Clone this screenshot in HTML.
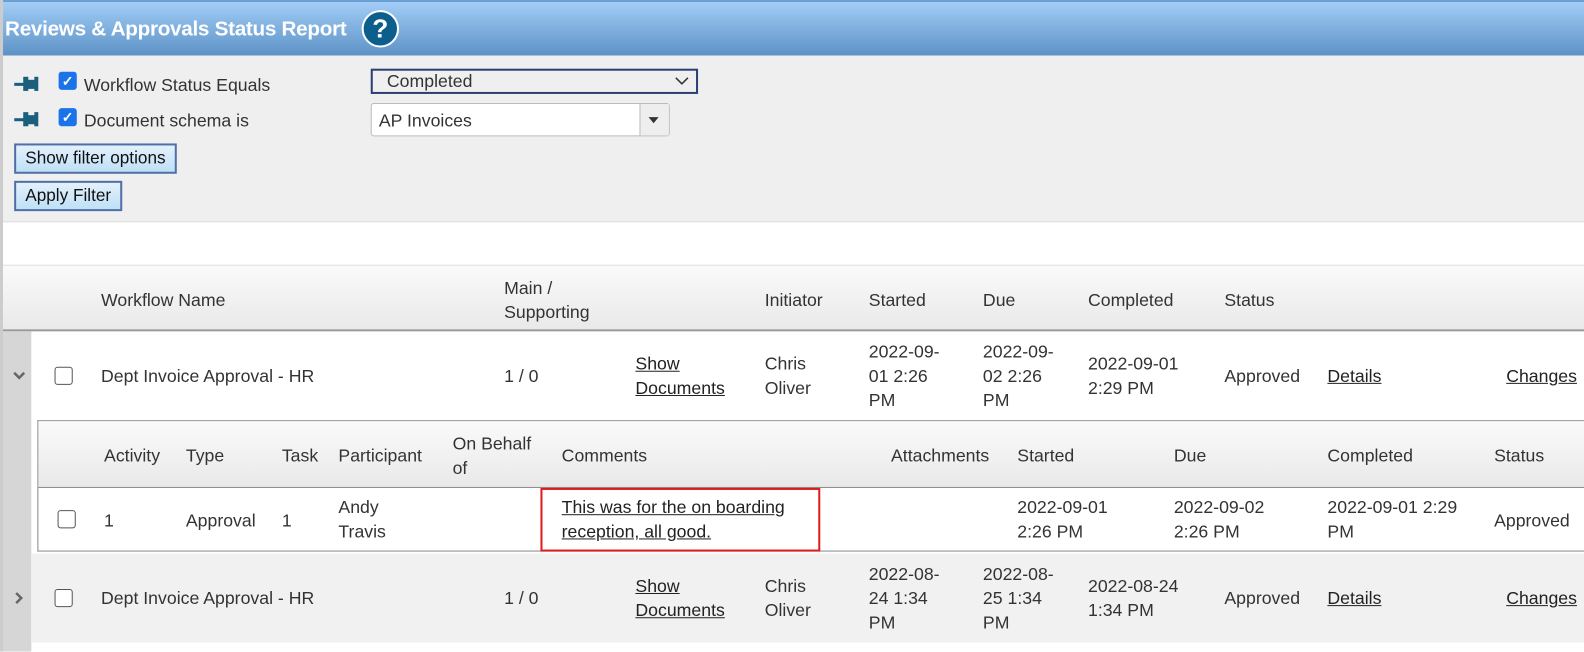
<!DOCTYPE html>
<html><head><meta charset="utf-8"><style>
*{margin:0;padding:0;box-sizing:border-box}
body{width:1584px;height:645px;overflow:hidden;background:#fff;font-family:"Liberation Sans",sans-serif;font-size:17.5px;color:#333;position:relative}
#w{position:absolute;left:0;top:0;width:1568px;height:640px;transform:scale(1.0102);transform-origin:0 0}
.a{position:absolute;line-height:24px;white-space:nowrap}
u{text-decoration:underline;color:#222}
.cb{position:absolute;width:18px;height:18px;border:1.5px solid #555;border-radius:3px;background:#fff}
.chk{position:absolute;width:18px;height:18px;background:#1a73e8;border-radius:3px;color:#fff;font-size:14px;line-height:18px;text-align:center;font-weight:bold}
.btn{position:absolute;height:30px;border:2px solid #4f6fa6;background:linear-gradient(#e3f1fc,#bfe0f7);font-size:17px;line-height:26px;padding:0 9px;color:#111}
.pin{position:absolute;width:24px;height:16px}
</style></head><body><div id="w">
<div style="position:absolute;left:0;top:0;width:3px;height:645px;background:#ccc"></div>
<div style="position:absolute;left:3px;top:0;width:1581px;height:55px;background:linear-gradient(#a2cdf6,#5d92c6);border-top:2px solid #6b9fd3"></div>
<div class="a" style="left:5px;top:16px;color:#fff;font-weight:bold;font-size:20.5px;line-height:26px;letter-spacing:-0.3px">Reviews &amp; Approvals Status Report</div>
<div style="position:absolute;left:358px;top:10px;width:37px;height:37px;border-radius:50%;background:#0c5f8c;border:2px solid #fff;color:#fff;font-weight:bold;font-size:26px;line-height:32px;text-align:center">?</div>
<div style="position:absolute;left:3px;top:55px;width:1581px;height:165px;background:#efefef;border-bottom:1px solid #ddd"></div>
<svg class="pin" style="left:14px;top:75px" viewBox="0 0 24 16"><rect x="0" y="7" width="10" height="3" fill="#1b5f7d"/><rect x="9" y="1" width="5" height="14" fill="#1b5f7d"/><rect x="13" y="4" width="8" height="9" fill="#1b5f7d"/><rect x="20" y="1" width="4" height="14" fill="#1b5f7d"/></svg>
<svg class="pin" style="left:14px;top:110px" viewBox="0 0 24 16"><rect x="0" y="7" width="10" height="3" fill="#1b5f7d"/><rect x="9" y="1" width="5" height="14" fill="#1b5f7d"/><rect x="13" y="4" width="8" height="9" fill="#1b5f7d"/><rect x="20" y="1" width="4" height="14" fill="#1b5f7d"/></svg>
<div class="chk" style="left:58px;top:71px">✓</div>
<div class="chk" style="left:58px;top:107px">✓</div>
<div class="a" style="left:83px;top:72px">Workflow Status Equals</div>
<div class="a" style="left:83px;top:107px">Document schema is</div>
<div style="position:absolute;left:367px;top:68px;width:324px;height:25px;border:2px solid #2a3f73;background:#efefef"></div>
<div class="a" style="left:383px;top:68px">Completed</div>
<svg style="position:absolute;left:668px;top:75px" width="14" height="10"><path d="M1 2 L7 8 L13 2" stroke="#333" stroke-width="1.5" fill="none"/></svg>
<div style="position:absolute;left:367px;top:102px;width:296px;height:33px;border:1px solid #bbb;border-radius:3px;background:#fff"></div>
<div style="position:absolute;left:633px;top:103px;width:29px;height:31px;background:#eee;border-left:1px solid #bbb"></div>
<svg style="position:absolute;left:641px;top:115px" width="12" height="8"><path d="M1 1 L11 1 L6 7Z" fill="#333"/></svg>
<div class="a" style="left:375px;top:107px">AP Invoices</div>
<div class="btn" style="left:14px;top:142px">Show filter options</div>
<div class="btn" style="left:14px;top:179px">Apply Filter</div>
<div style="position:absolute;left:3px;top:262px;width:1581px;height:66px;background:linear-gradient(#fafafa,#e9e9e9);border-top:1px solid #ddd;border-bottom:2px solid #999"></div>
<div class="a" style="left:100px;top:285px">Workflow Name</div>
<div class="a" style="left:499px;top:273px">Main /<br>Supporting</div>
<div class="a" style="left:757px;top:285px">Initiator</div>
<div class="a" style="left:860px;top:285px">Started</div>
<div class="a" style="left:973px;top:285px">Due</div>
<div class="a" style="left:1077px;top:285px">Completed</div>
<div class="a" style="left:1212px;top:285px">Status</div>
<div style="position:absolute;left:3px;top:328px;width:28px;height:317px;background:#d6d6d6"></div>
<svg style="position:absolute;left:12px;top:367px" width="14" height="10"><path d="M2 2 L7 7 L12 2" stroke="#666" stroke-width="2.5" fill="none"/></svg>
<div class="cb" style="left:54px;top:363px"></div>
<div class="a" style="left:100px;top:360px">Dept Invoice Approval - HR</div>
<div class="a" style="left:499px;top:360px">1 / 0</div>
<div class="a" style="left:629px;top:348px"><u>Show</u><br><u>Documents</u></div>
<div class="a" style="left:757px;top:348px">Chris<br>Oliver</div>
<div class="a" style="left:860px;top:336px">2022-09-<br>01 2:26<br>PM</div>
<div class="a" style="left:973px;top:336px">2022-09-<br>02 2:26<br>PM</div>
<div class="a" style="left:1077px;top:348px">2022-09-01<br>2:29 PM</div>
<div class="a" style="left:1212px;top:360px">Approved</div>
<div class="a" style="left:1314px;top:360px"><u>Details</u></div>
<div class="a" style="left:1491px;top:360px"><u>Changes</u></div>
<div style="position:absolute;left:37px;top:416px;width:1547px;height:130px;border:1px solid #888;border-right:none;background:#fff"></div>
<div style="position:absolute;left:38px;top:417px;width:1546px;height:66px;background:linear-gradient(#fafafa,#e9e9e9);border-bottom:1px solid #888"></div>
<div class="a" style="left:103px;top:439px">Activity</div>
<div class="a" style="left:184px;top:439px">Type</div>
<div class="a" style="left:279px;top:439px">Task</div>
<div class="a" style="left:335px;top:439px">Participant</div>
<div class="a" style="left:448px;top:427px">On Behalf<br>of</div>
<div class="a" style="left:556px;top:439px">Comments</div>
<div class="a" style="left:882px;top:439px">Attachments</div>
<div class="a" style="left:1007px;top:439px">Started</div>
<div class="a" style="left:1162px;top:439px">Due</div>
<div class="a" style="left:1314px;top:439px">Completed</div>
<div class="a" style="left:1479px;top:439px">Status</div>
<div class="cb" style="left:57px;top:505px"></div>
<div class="a" style="left:103px;top:503px">1</div>
<div class="a" style="left:184px;top:503px">Approval</div>
<div class="a" style="left:279px;top:503px">1</div>
<div class="a" style="left:335px;top:490px">Andy<br>Travis</div>
<div style="position:absolute;left:535px;top:483px;width:277px;height:63px;border:2px solid #e01b1b"></div>
<div class="a" style="left:556px;top:490px"><u>This was for the on boarding</u><br><u>reception, all good.</u></div>
<div class="a" style="left:1007px;top:490px">2022-09-01<br>2:26 PM</div>
<div class="a" style="left:1162px;top:490px">2022-09-02<br>2:26 PM</div>
<div class="a" style="left:1314px;top:490px">2022-09-01 2:29<br>PM</div>
<div class="a" style="left:1479px;top:503px">Approved</div>
<div style="position:absolute;left:31px;top:548px;width:1553px;height:88px;background:#f1f1f1"></div>
<svg style="position:absolute;left:14px;top:585px" width="10" height="14"><path d="M2 2 L7 7 L2 12" stroke="#666" stroke-width="2.5" fill="none"/></svg>
<div class="cb" style="left:54px;top:583px"></div>
<div class="a" style="left:100px;top:580px">Dept Invoice Approval - HR</div>
<div class="a" style="left:499px;top:580px">1 / 0</div>
<div class="a" style="left:629px;top:568px"><u>Show</u><br><u>Documents</u></div>
<div class="a" style="left:757px;top:568px">Chris<br>Oliver</div>
<div class="a" style="left:860px;top:556px">2022-08-<br>24 1:34<br>PM</div>
<div class="a" style="left:973px;top:556px">2022-08-<br>25 1:34<br>PM</div>
<div class="a" style="left:1077px;top:568px">2022-08-24<br>1:34 PM</div>
<div class="a" style="left:1212px;top:580px">Approved</div>
<div class="a" style="left:1314px;top:580px"><u>Details</u></div>
<div class="a" style="left:1491px;top:580px"><u>Changes</u></div>
</div></body></html>
